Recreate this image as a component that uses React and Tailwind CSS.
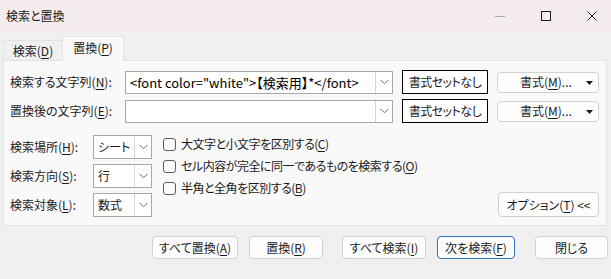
import React from "react";

const FONT = {
  fontFamily: '"Noto Sans CJK JP", "Noto Sans", sans-serif',
  fontFeatureSettings: '"palt"',
};

function Key({ k }) {
  return <span className="underline underline-offset-[2px] decoration-[1px]">{k}</span>;
}

function Chevron() {
  return (
    <svg width="9" height="6" viewBox="0 0 9 6" className="text-[#6b6b6b]">
      <polyline points="0.5,0.8 4.5,4.8 8.5,0.8" fill="none" stroke="currentColor" strokeWidth="1" />
    </svg>
  );
}

function Combo({ value, width }) {
  return (
    <div className={`flex h-[23px] ${width} border border-[#a9a9a9] bg-white`}>
      <div className="flex-1 truncate pl-[4px] text-[13px] leading-[21px] text-black">{value}</div>
      <div className="flex w-[17px] items-center justify-center border-l border-[#d4d4d4]">
        <Chevron />
      </div>
    </div>
  );
}

function Select({ value }) {
  return (
    <div className="flex h-[24px] w-[59px] border border-[#a9a9a9] bg-white">
      <div className="flex-1 pl-[4px] text-[12px] leading-[22px]">{value}</div>
      <div className="flex w-[17px] items-center justify-center border-l border-[#d4d4d4]">
        <Chevron />
      </div>
    </div>
  );
}

function FormatButton() {
  return (
    <div className="relative flex h-[21px] w-[102px] items-center rounded-[4px] border border-[#d1d1d1] bg-[#fdfdfd]">
      <span className="ml-[22px] text-[12px]">
        書式(<Key k="M" />)...
      </span>
      <svg width="7" height="4" viewBox="0 0 7 4" className="absolute right-[5px] top-[8px]">
        <polygon points="0,0 7,0 3.5,4" fill="#1a1a1a" />
      </svg>
    </div>
  );
}

function NoFormat() {
  return (
    <div className="ml-[9px] flex h-[24px] w-[86px] items-center justify-center border border-black bg-white text-[12px] tracking-[-0.5px]">
      書式セットなし
    </div>
  );
}

function Checkbox({ children }) {
  return (
    <div className="flex h-[22px] items-center gap-[5px]">
      <div className="h-[13px] w-[13px] rounded-[3px] border border-[#5e5e5e] bg-[#fbfbfb]" />
      <span className="text-[12px] tracking-[-0.5px]">{children}</span>
    </div>
  );
}

function Btn({ children, w, accent }) {
  return (
    <div
      className={`flex h-[23px] ${w} items-center justify-center rounded-[4px] border bg-[#fdfdfd] text-[12px] ${
        accent ? "border-[#2b74c8]" : "border-[#d1d1d1]"
      }`}
    >
      {children}
    </div>
  );
}

export default function App() {
  return (
    <div className="h-[279px] w-[611px] overflow-hidden bg-[#f0f0f0] text-[#1a1a1a]" style={FONT}>
      {/* title bar */}
      <div className="flex h-[32px] items-center bg-[#f5eded]">
        <span className="pl-[6px] text-[12px]">検索と置換</span>
        <div className="ml-auto flex items-center">
          <div className="mr-[36px] h-px w-[10px] bg-[#a8a8a8]" />
          <div className="mr-[36px] h-[10px] w-[10px] border border-[#1a1a1a]" />
          <svg width="10" height="10" viewBox="0 0 10 10" className="mr-[14px]">
            <path d="M0.5 0.5 L9.5 9.5 M9.5 0.5 L0.5 9.5" stroke="#1a1a1a" strokeWidth="1" />
          </svg>
        </div>
      </div>

      {/* tabs */}
      <div className="flex h-[28px] items-end pl-[3px]">
        <div className="flex h-[20px] w-[59px] items-center justify-center border-l border-t border-[#e3e3e3] text-[12px]">
          検索(<Key k="D" />)
        </div>
        <div className="relative top-px z-10 flex h-[25px] w-[62px] items-center justify-center border-x border-t border-[#e3e3e3] bg-[#f9f9f9] pb-[2px] text-[12px]">
          置換(<Key k="P" />)
        </div>
      </div>

      {/* panel */}
      <div className="mx-[3px] h-[166px] w-[604px] border border-[#e3e3e3] bg-[#f9f9f9] pl-[6px] pr-[7px] pt-[9px]">
        <div className="flex items-center">
          <span className="w-[115px] text-[12px]">
            検索する文字列(<Key k="N" />):
          </span>
          <Combo width="w-[268px]" value={'<font color="white">【検索用】*</font>'} />
          <NoFormat />
          <div className="ml-[9px]">
            <FormatButton />
          </div>
        </div>
        <div className="mt-[5px] flex items-center">
          <span className="w-[115px] text-[12px]">
            置換後の文字列(<Key k="E" />):
          </span>
          <Combo width="w-[268px]" value="" />
          <NoFormat />
          <div className="ml-[9px]">
            <FormatButton />
          </div>
        </div>

        <div className="mt-[12px] flex">
          <div className="flex flex-col gap-[5px]">
            {[
              ["検索場所(", "H", "):", "シート"],
              ["検索方向(", "S", "):", "行"],
              ["検索対象(", "L", "):", "数式"],
            ].map(([a, k, b, v]) => (
              <div key={k} className="flex items-center">
                <span className="w-[83px] text-[12px]">
                  {a}
                  <Key k={k} />
                  {b}
                </span>
                <Select value={v} />
              </div>
            ))}
          </div>
          <div className="-mt-[2px] ml-[11px] flex flex-col">
            <Checkbox>
              大文字と小文字を区別する(<Key k="C" />)
            </Checkbox>
            <Checkbox>
              セル内容が完全に同一であるものを検索する(<Key k="O" />)
            </Checkbox>
            <Checkbox>
              半角と全角を区別する(<Key k="B" />)
            </Checkbox>
          </div>
          <div className="ml-auto flex items-end">
            <div className="flex h-[25px] w-[101px] items-center justify-center rounded-[4px] border border-[#d1d1d1] bg-[#fdfdfd] text-[12px]">
              オプション(<Key k="T" />) &lt;&lt;
            </div>
          </div>
        </div>
      </div>

      {/* bottom buttons */}
      <div className="mt-[10px] flex pl-[152px]">
        <Btn w="w-[86px]">
          すべて置換(<Key k="A" />)
        </Btn>
        <div className="ml-[11px]">
          <Btn w="w-[74px]">
            置換(<Key k="R" />)
          </Btn>
        </div>
        <div className="ml-[19px]">
          <Btn w="w-[84px]">
            すべて検索(<Key k="I" />)
          </Btn>
        </div>
        <div className="ml-[11px]">
          <Btn w="w-[78px]" accent>
            次を検索(<Key k="F" />)
          </Btn>
        </div>
        <div className="ml-[20px]">
          <Btn w="w-[73px]">閉じる</Btn>
        </div>
      </div>
    </div>
  );
}
